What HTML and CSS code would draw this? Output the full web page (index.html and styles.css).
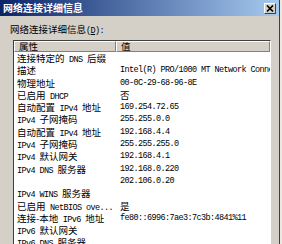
FILE: index.html
```html
<!DOCTYPE html>
<html lang="zh-CN">
<head>
    <meta charset="UTF-8">
    <title>网络连接详细信息</title>
    <link rel="stylesheet" href="styles.css">
</head>
<body>
    <div class="window">
        <div class="titlebar">
            <span class="title">网络连接详细信息</span>
            <span class="close">
                <svg width="8" height="7" viewBox="0 0 8 7">
                    <path d="M1 0.5 L7 6.5 M7 0.5 L1 6.5" stroke="#000" stroke-width="1.6" fill="none"/>
                </svg>
            </span>
        </div>

        <div class="content">
            <div class="label">网络连接详细信息<span class="en">(<u>D</u>):</span></div>

            <div class="list">
                <div class="head">
                    <div class="th prop">属性</div>
                    <div class="th val">值</div>
                </div>

                <!-- property rows -->
                <div class="row"><div class="prop">连接特定的<span class="en"> DNS </span>后缀</div><div class="val"></div></div>
                <div class="row"><div class="prop">描述</div><div class="val">Intel(R) PRO/1000 MT Network Connection</div></div>
                <div class="row"><div class="prop">物理地址</div><div class="val">00-0C-29-68-96-8E</div></div>
                <div class="row"><div class="prop">已启用<span class="en"> DHCP</span></div><div class="val"><span class="zh">否</span></div></div>
                <div class="row"><div class="prop">自动配置<span class="en"> IPv4 </span>地址</div><div class="val">169.254.72.65</div></div>
                <div class="row"><div class="prop"><span class="en">IPv4 </span>子网掩码</div><div class="val">255.255.0.0</div></div>
                <div class="row"><div class="prop">自动配置<span class="en"> IPv4 </span>地址</div><div class="val">192.168.4.4</div></div>
                <div class="row"><div class="prop"><span class="en">IPv4 </span>子网掩码</div><div class="val">255.255.255.0</div></div>
                <div class="row"><div class="prop"><span class="en">IPv4 </span>默认网关</div><div class="val">192.168.4.1</div></div>
                <div class="row"><div class="prop"><span class="en">IPv4 DNS </span>服务器</div><div class="val">192.168.0.220</div></div>
                <div class="row"><div class="prop"></div><div class="val">202.106.0.20</div></div>
                <div class="row"><div class="prop"><span class="en">IPv4 WINS </span>服务器</div><div class="val"></div></div>
                <div class="row"><div class="prop">已启用<span class="en"> NetBIOS ove...</span></div><div class="val"><span class="zh">是</span></div></div>
                <div class="row"><div class="prop">连接-本地<span class="en"> IPv6 </span>地址</div><div class="val">fe80::6996:7ae3:7c3b:4841%11</div></div>
                <div class="row"><div class="prop"><span class="en">IPv6 </span>默认网关</div><div class="val"></div></div>
                <div class="row"><div class="prop"><span class="en">IPv6 DNS </span>服务器</div><div class="val"></div></div>
            </div>
        </div>
    </div>
</body>
</html>
```

FILE: styles.css
```css
body {
    margin: 0;
    background: #ece9e2;
    font-family: "Noto Sans CJK SC", sans-serif;
    font-size: 9.5px;
    color: #000;
}
.en,
.val {
    font-family: "Liberation Mono", monospace;
    font-size: 8.5px;
    letter-spacing: -0.6px;
}
.zh {
    font-family: "Noto Sans CJK SC", sans-serif;
    font-size: 9.5px;
    letter-spacing: 0;
}
.window {
    width: 279px;
    height: 244px;
    background: #d4d0c8;
    border-right: 1px solid #404040;
    overflow: hidden;
}
.titlebar {
    height: 16px;
    display: flex;
    align-items: center;
    justify-content: space-between;
    padding: 0 3px;
    background: linear-gradient(to right, #0a246a, #a6caf0);
}
.title {
    color: #fff;
    font-weight: bold;
    font-size: 10px;
    line-height: 16px;
}
.close {
    width: 10px;
    height: 9px;
    display: flex;
    align-items: center;
    justify-content: center;
    background: #d4d0c8;
    border-top: 1px solid #fff;
    border-left: 1px solid #fff;
    border-right: 1px solid #404040;
    border-bottom: 1px solid #404040;
}
.content {
    padding: 6px 0 0 10px;
}
.label {
    line-height: 14px;
    margin-bottom: 2px;
}
.list {
    margin-left: 3px;
    width: 256px;
    height: 220px;
    background: #fff;
    border-top: 1px solid #404040;
    border-left: 1px solid #404040;
    border-right: 1px solid #fff;
    overflow: hidden;
    box-shadow: 1px 1px 0 #d4d0c8;
}
.head {
    display: flex;
    height: 11px;
    white-space: nowrap;
}
.th {
    background: #d4d0c8;
    border-top: 1px solid #fff;
    border-left: 1px solid #fff;
    border-bottom: 1px solid #808080;
    border-right: 1px solid #808080;
    font-family: "Noto Sans CJK SC", sans-serif;
    font-size: 9.5px;
    line-height: 9px;
    height: 9px;
}
.th.prop {
    width: 96px;
    flex-shrink: 0;
    padding-left: 4px;
}
.th.val {
    flex: 1;
    padding-left: 4px;
}
.row {
    display: flex;
    height: 12.3px;
    line-height: 12.3px;
    white-space: nowrap;
}
.row .prop {
    width: 99px;
    flex-shrink: 0;
    padding-left: 3px;
    overflow: hidden;
}
.row .val {
    padding-left: 4px;
}
```
